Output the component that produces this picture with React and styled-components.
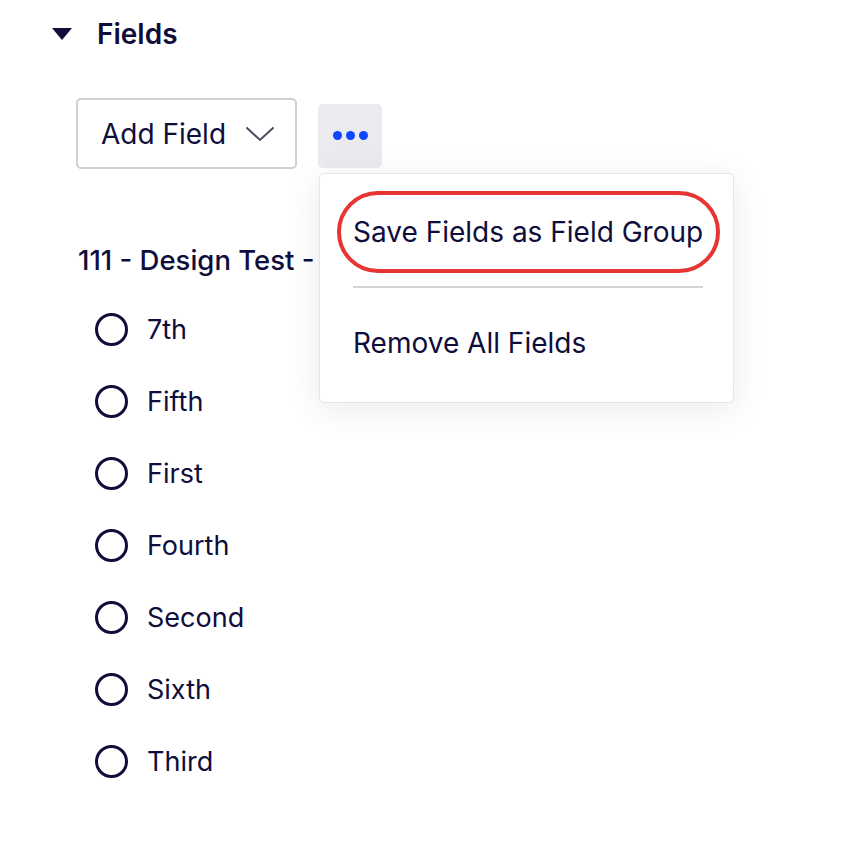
import React from 'react'
import styled, { createGlobalStyle } from 'styled-components'

const GlobalStyle = createGlobalStyle`
  body {
    margin: 0;
    background: #fff;
    font-family: Inter, "Noto Sans", sans-serif;
    color: #0e0d3b;
  }
`

const Page = styled.div`
  width: 864px;
  height: 846px;
  padding: 19px 0 0 52px;
  box-sizing: border-box;
`

const Header = styled.div`
  display: flex;
  align-items: center;
  gap: 25px;
  height: 30px;
`

const Caret = styled.span`
  width: 0;
  height: 0;
  border-left: 10px solid transparent;
  border-right: 10px solid transparent;
  border-top: 12px solid #0e0d3b;
`

const Heading = styled.h2`
  margin: 0;
  font-size: 28px;
  font-weight: 600;
  line-height: 30px;
`

const Toolbar = styled.div`
  display: flex;
  align-items: center;
  gap: 21px;
  margin: 49px 0 0 24px;
`

const AddButton = styled.button`
  display: flex;
  align-items: center;
  gap: 19px;
  width: 221px;
  height: 71px;
  padding: 0 0 0 23px;
  box-sizing: border-box;
  background: #fff;
  border: 2px solid #cfcfd4;
  border-radius: 5px;
  font-family: inherit;
  font-size: 28px;
  color: #0e0d3b;
`

const MoreWrap = styled.div`
  position: relative;
`

const MoreButton = styled.button`
  display: flex;
  align-items: center;
  justify-content: center;
  gap: 4px;
  width: 64px;
  height: 64px;
  margin-top: 4px;
  padding: 0;
  background: #ebebef;
  border: none;
  border-radius: 5px;
`

const Dot = styled.span`
  width: 9px;
  height: 9px;
  border-radius: 50%;
  background: #0a47ff;
`

const Menu = styled.div`
  position: absolute;
  top: 73px;
  left: 1px;
  width: 415px;
  padding: 17px 0 4px 17px;
  box-sizing: border-box;
  background: #fff;
  border: 1px solid #e6e6ea;
  border-radius: 5px;
  box-shadow: 0 6px 34px rgba(20, 20, 50, 0.09);
  z-index: 2;
`

const MenuItem = styled.div`
  display: flex;
  align-items: center;
  height: ${p => p.$h}px;
  padding-left: ${p => (p.$highlight ? 12 : 16)}px;
  font-size: 28px;
  white-space: nowrap;
  ${p => p.$highlight && `
    width: 383px;
    box-sizing: border-box;
    border: 4px solid #e53535;
    border-radius: 41px;
  `}
`

const Divider = styled.div`
  width: 350px;
  height: 2px;
  margin: 13px 0 0 16px;
  background: #d4d2d6;
`

const GroupTitle = styled.div`
  margin: 73px 0 0 26px;
  height: 36px;
  line-height: 36px;
  font-size: 27.5px;
  font-weight: 500;
  white-space: nowrap;
`

const Options = styled.div`
  display: flex;
  flex-direction: column;
  margin: 15px 0 0 43px;
`

const Option = styled.label`
  display: flex;
  align-items: center;
  gap: 19px;
  height: 72px;
  font-size: 27px;
`

const Radio = styled.span`
  width: 33px;
  height: 33px;
  box-sizing: border-box;
  border: 3px solid #0e0d3b;
  border-radius: 50%;
`

const options = ['7th', 'Fifth', 'First', 'Fourth', 'Second', 'Sixth', 'Third']

export default function App() {
  return (
    <>
      <GlobalStyle />
      <Page>
        <Header>
          <Caret />
          <Heading>Fields</Heading>
        </Header>
        <Toolbar>
          <AddButton>
            Add Field
            <svg width="30" height="16" viewBox="0 0 30 16" fill="none">
              <path d="M1.5 1.5 L15 14 L28.5 1.5" stroke="#4b4b5c" strokeWidth="2" />
            </svg>
          </AddButton>
          <MoreWrap>
            <MoreButton>
              <Dot />
              <Dot />
              <Dot />
            </MoreButton>
            <Menu>
              <MenuItem $highlight $h={82}>Save Fields as Field Group</MenuItem>
              <Divider />
              <MenuItem $h={110}>Remove All Fields</MenuItem>
            </Menu>
          </MoreWrap>
        </Toolbar>
        <GroupTitle>111 - Design Test - Fields</GroupTitle>
        <Options>
          {options.map(o => (
            <Option key={o}>
              <Radio />
              {o}
            </Option>
          ))}
        </Options>
      </Page>
    </>
  )
}
